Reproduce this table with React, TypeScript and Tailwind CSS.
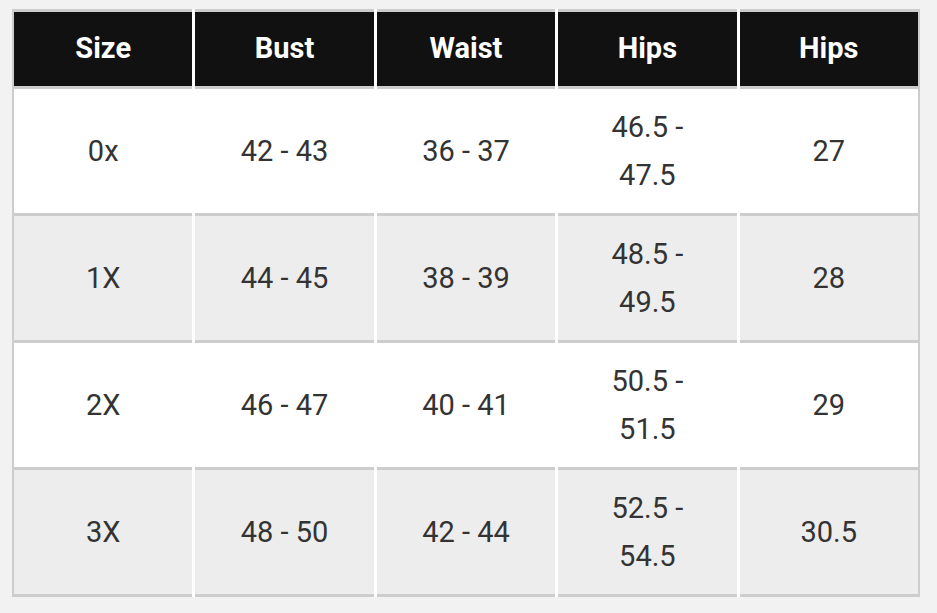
import React from "react";

const headers = ["Size", "Bust", "Waist", "Hips", "Hips"];

const rows = [
  ["0x", "42 - 43", "36 - 37", "46.5 - 47.5", "27"],
  ["1X", "44 - 45", "38 - 39", "48.5 - 49.5", "28"],
  ["2X", "46 - 47", "40 - 41", "50.5 - 51.5", "29"],
  ["3X", "48 - 50", "42 - 44", "52.5 - 54.5", "30.5"],
];

const App = () => {
  return (
    <div
      className="w-[937px] h-[613px] bg-[#f2f2f2] pt-[9px] pl-[12px]"
      style={{ fontFamily: "Roboto, 'Liberation Sans', sans-serif" }}
    >
      <div className="w-[908px] bg-white border-x-2 border-[#cdcdcd] grid grid-cols-5 gap-x-[3px]">
        {headers.map((h, i) => (
          <div
            key={i}
            className="h-[80px] bg-[#111111] border-t-[3px] border-b-[3px] border-[#cdcdcd] flex items-center justify-center text-white font-bold text-[29px]"
          >
            {h}
          </div>
        ))}
        {rows.map((row, r) =>
          row.map((cell, c) => (
            <div
              key={`${r}-${c}`}
              className={`h-[127px] border-b-[3px] border-[#cdcdcd] flex items-center justify-center text-center text-[#333333] text-[29px] leading-[48px] px-[40px] ${
                r % 2 === 0 ? "bg-white" : "bg-[#ededed]"
              }`}
            >
              {cell}
            </div>
          ))
        )}
      </div>
    </div>
  );
};

export default App;
